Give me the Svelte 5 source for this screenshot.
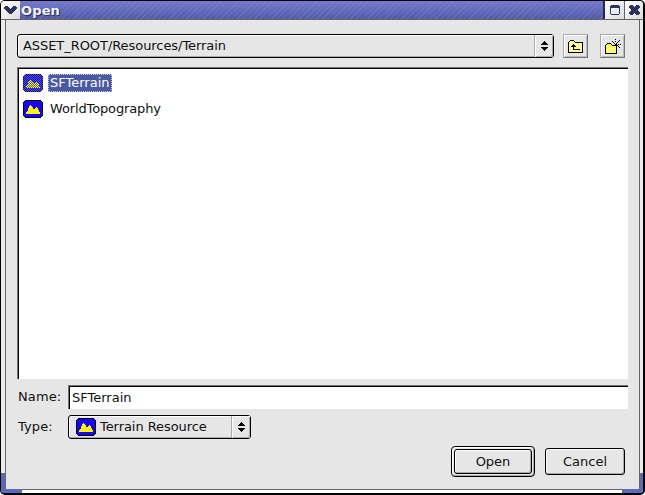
<script>
  const files = [
    { name: 'SFTerrain', selected: true },
    { name: 'WorldTopography', selected: false }
  ];
  let name = $state('SFTerrain');
</script>

{#snippet terrain(dim)}
  <svg class="terrain" width="20" height="18" viewBox="0 0 20 18" shape-rendering="crispEdges">
    <defs>
      <pattern id="dither" width="2" height="2" patternUnits="userSpaceOnUse">
        <path d="M0 0h1v1h-1zM1 1h1v1h-1z" fill="#4b5ba5" />
      </pattern>
    </defs>
    <path d="M2 0h16v1h1v1h1v14h-1v1h-1v1H2v-1H1v-1H0V2h1V1h1z" fill="#000" />
    <path d="M2 1h16v1h1v14h-1v1H2v-1H1V2h1z" fill="#1800ff" />
    <path d="M3 14v-2h1v-1h1V8h1V6h1V5h1v1h1v1h1v2h2V8h1V7h1v1h1v2h1v2h1v2z" fill="#fff600" />
    {#if dim}<path d="M2 0h16v1h1v1h1v14h-1v1h-1v1H2v-1H1v-1H0V2h1V1h1z" fill="url(#dither)" />{/if}
  </svg>
{/snippet}

{#snippet arrows()}
  <span class="arrows">
    <svg width="7" height="10" viewBox="0 0 7 10" shape-rendering="crispEdges">
      <path d="M3 0h1v1h1v1h1v1h1v1H0V3h1V2h1V1h1zM0 6h7v1H6v1H5v1H4v1H3V9H2V8H1V7H0z" />
    </svg>
  </span>
{/snippet}

<div class="window">
  <header>
    <div class="menu">
      <svg width="13" height="9" viewBox="0 0 13 9" shape-rendering="crispEdges"><path d="M1 0h3v1h1v1h1v1h1V2h1V1h1V0h3v1h1v2h-1v1h-1v1h-1v1H9v1H8v1H5V7H4V6H3V5H2V4H1V3H0V1h1z" fill="#293260" /></svg>
    </div>
    <div class="title"><span>Open</span></div>
    <div class="ctl max">
      <svg width="10" height="10" viewBox="0 0 10 10" shape-rendering="crispEdges"><path fill-rule="evenodd" d="M1 0h8v1h1v8h-1v1H1V9H0V1h1zM1 3v6h8V3z" fill="#293260" /></svg>
    </div>
    <div class="ctl">
      <svg width="11" height="10" viewBox="0 0 11 10" shape-rendering="crispEdges"><path d="M1 0h3v1h1v1h1V1h1V0h3v1h1v2h-1v1H9v2h1v1h1v2h-1v1H7V9H6V8H5v1H4v1H1V9H0V7h1V6h1V4H1V3H0V1h1z" fill="#293260" /></svg>
    </div>
  </header>

  <div class="body">
    <div class="frame left"></div>
    <main>
      <div class="toolbar">
        <div class="combo path"><span class="text">ASSET_ROOT/Resources/Terrain</span>{@render arrows()}</div>
        <div class="tool">
          <svg width="15" height="13" viewBox="0 0 15 13" shape-rendering="crispEdges">
            <path d="M2 0h4v1h1v1h8v11H0V2h1V1h1z" fill="#000" />
            <path d="M2 1h4v1h1v1h7v9H1V2h1z" fill="#ffff99" />
            <path d="M5 4h1v1h1v1h1v1H6v2h6v1H5V7H3V6h1V5h1z" fill="#000" />
          </svg>
        </div>
        <div class="tool new">
          <svg width="16" height="15" viewBox="0 0 16 15" shape-rendering="crispEdges">
            <path d="M2 4h4v1h1v1h5v9H0V6h1V5h1z" fill="#000" />
            <path d="M2 5h4v1h1v1h4v7H1V6h1z" fill="#ffff40" />
            <path d="M2 7h1v1H2zM4 7h1v1H4zM6 7h1v1H6zM8 7h1v1H8zM3 9h1v1H3zM5 9h1v1H5zM7 9h1v1H7zM9 9h1v1H9zM2 11h1v1H2zM4 11h1v1H4zM6 11h1v1H6zM8 11h1v1H8zM3 13h1v1H3zM5 13h1v1H5zM7 13h1v1H7z" fill="#fff" />
            <path d="M10 0h1v1h-1zM10 2h1v1h-1zM7 2h1v1H7zM8 3h1v1H8zM9 4h1v1H9zM14 1h1v1h-1zM13 2h1v1h-1zM12 3h1v1h-1zM11 4h1v2h-1zM10 5h1v1h-1zM13 5h1v1h-1zM15 5h1v1h-1zM12 6h1v1h-1zM13 7h1v1h-1zM14 8h1v1h-1z" fill="#000" />
          </svg>
        </div>
      </div>

      <div class="list">
        {#each files as f}
          <div class="row">{@render terrain(f.selected)}<span class="label" class:selected={f.selected}>{f.name}</span></div>
        {/each}
      </div>

      <div class="field name">
        <label for="name">Name:</label>
        <input id="name" bind:value={name} />
      </div>
      <div class="field type">
        <span class="lab">Type:</span>
        <div class="combo kind">{@render terrain(false)}<span class="text">Terrain Resource</span>{@render arrows()}</div>
      </div>

      <div class="actions">
        <div class="default"><button class="open">Open</button></div>
        <button>Cancel</button>
      </div>
    </main>
    <div class="frame right"></div>
  </div>
  <footer><i></i><b></b><i></i></footer>
</div>

<style>
  :global(body) { background: #fff; overflow: hidden; }
  * { box-sizing: border-box; }
  .window {
    width: 645px; height: 495px; border: 1px solid #000; border-right-width: 2px; border-bottom-width: 2px;
    border-radius: 5px; overflow: hidden; display: flex; flex-direction: column; background: #e6e6e6;
    font: 13px/16px "DejaVu Sans", sans-serif; color: #111;
  }
  svg { display: block; flex: none; }
  header { height: 19px; display: flex; border-bottom: 1px solid #68646a; flex: none; }
  .menu { width: 19px; padding: 5px 0 0 3px; background: linear-gradient(135deg, #fff, #dcdcdc); }
  .title {
    flex: 1; border-right: 2px solid #202858; color: #f4f4ff; font-weight: bold; line-height: 19px; height: 18px; padding-left: 1px;
    letter-spacing: 0.15px; text-shadow: 1px 1px 1px #222a50;
    background: repeating-linear-gradient(135deg, #0000 0 2px, #8c94b84d 2px 3px, #0000 3px 4px),
      linear-gradient(#7478d0, #505ca6);
  }
  .ctl { width: 18px; display: flex; align-items: center; justify-content: center; background: linear-gradient(135deg, #fff, #dcdcdc); }
  .max { width: 20px; border-right: 1px solid #68646a; }
  .body { flex: 1; display: flex; min-height: 0; }
  .frame { width: 5px; background: linear-gradient(#f0eaec 0 453px, #5c69b8 453px); border-right: 1px solid #68646a; }
  .right { border-right: 0; border-left: 1px solid #68646a; width: 4px; }
  main { flex: 1; min-width: 0; padding: 14px 11px 0; display: flex; flex-direction: column; }
  .toolbar { display: flex; height: 24px; padding-right: 3px; }
  .combo {
    height: 24px; border: 1px solid #000; border-radius: 3px;
    box-shadow: inset 1px 1px #fff, inset -1px -1px #aaa; display: flex; align-items: center;
  }
  .combo .text { flex: 1; white-space: nowrap; letter-spacing: -0.06px; }
  .path { width: 537px; flex: none; padding-left: 5px; }
  .arrows {
    width: 19px; height: 22px; border-left: 1px solid #aaa; display: flex; align-items: center; justify-content: center;
    box-shadow: inset 1px 1px #fff, inset -1px -1px #aaa;
  }
  .tool {
    width: 25px; flex: none; height: 24px; margin-left: 9px; border: 1px solid #aaa; border-right-color: #777; border-bottom-color: #777;
    box-shadow: inset 1px 1px #fff, inset -1px -1px #bbb; display: flex; align-items: center; justify-content: center;
  }
  .new { margin-left: 12px; }
  .list, input { border: 0; border-top: 1px solid #777; border-left: 1px solid #777; box-shadow: inset 1px 1px #000; background: #fff; }
  .list { height: 312px; margin-top: 9px; padding: 6px 5px; flex: none; }
  .row { display: flex; height: 26px; align-items: flex-start; }
  .label { margin-left: 5px; height: 18px; padding: 1px 2px; letter-spacing: -0.14px; }
  .selected { width: 64px; letter-spacing: 0; background: #4a5aa2; color: #fff; outline: 1px dotted #c8cce8; outline-offset: -1px; }
  .field { display: flex; }
  .field label, .field .lab { width: 51px; padding-left: 1px; letter-spacing: 0.1px; }
  .name { margin-top: 6px; height: 24px; line-height: 23px; }
  input { width: 560px; height: 24px; padding: 0 0 1px 3px; font: inherit; line-height: 20px; outline: none; border-radius: 0; color: inherit; }
  .type { margin-top: 6px; line-height: 24px; }
  .kind { width: 183px; padding-left: 7px; }
  .kind .text { padding-left: 4px; }
  .actions { display: flex; justify-content: flex-end; align-items: center; gap: 10px; height: 31px; margin-top: 7px; padding-right: 3px; }
  button {
    width: 80px; height: 27px; padding: 1px 0 0; border: 1px solid #000;
    border-radius: 3px; background: #e6e6e6; box-shadow: inset 1px 1px #fff, inset -1px -1px #aaa; font: inherit; color: inherit;
  }
  .default { width: 84px; height: 31px; border: 1px solid #000; border-radius: 4px; padding: 2px; box-shadow: inset 1px 1px #fff, inset -1px -1px #aaa; }
  .open { width: 78px; height: 25px; display: block; }
  footer { height: 4px; display: flex; flex: none; }
  footer i { width: 21px; background: #5c69b8; }
  footer b { flex: 1; background: #fff; border-top: 1px solid #68646a; }
</style>
